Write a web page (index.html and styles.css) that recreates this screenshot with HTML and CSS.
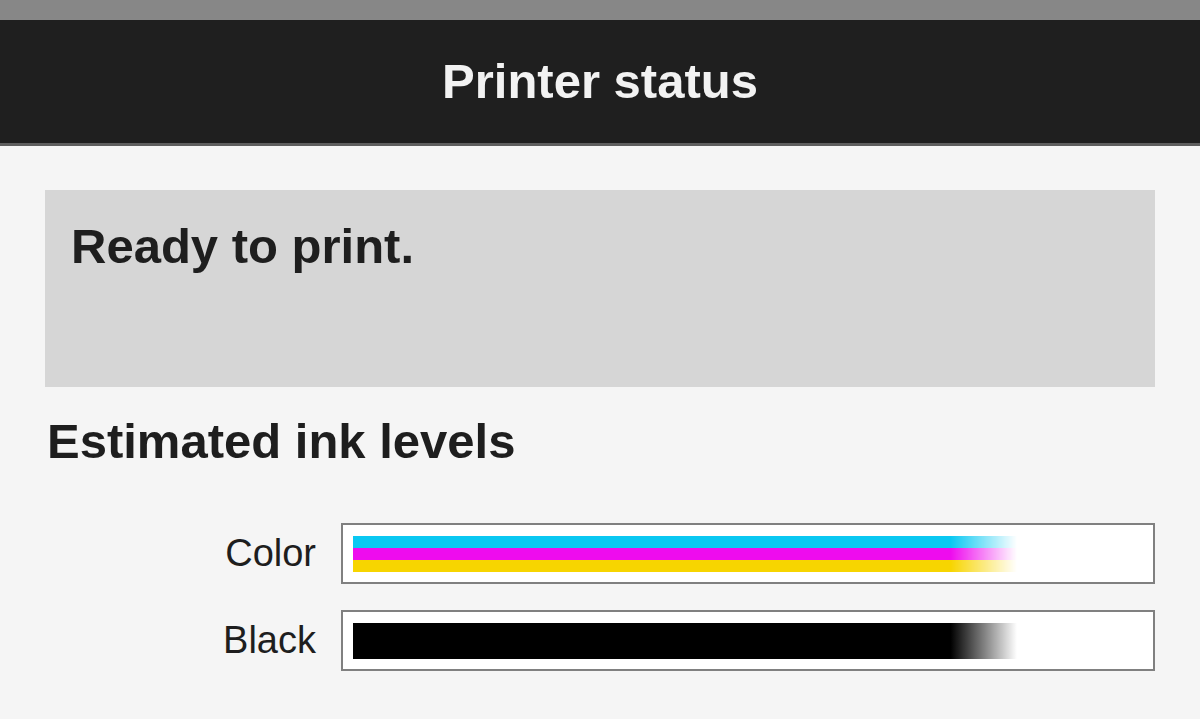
FILE: index.html
```html
<!DOCTYPE html>
<html lang="en">
<head>
  <meta charset="UTF-8">
  <title>Printer status</title>
  <link rel="stylesheet" href="styles.css">
</head>
<body>
  <div class="top-strip"></div>
  <header class="title-bar">
    <h1>Printer status</h1>
  </header>
  <main class="content">
    <div class="status-box">
      <p class="status-text">Ready to print.</p>
    </div>
    <h2>Estimated ink levels</h2>
    <div class="ink-list">
      <!-- Color cartridge -->
      <div class="ink-row">
        <span class="ink-label">Color</span>
        <div class="ink-bar">
          <div class="ink-fill color-fill" style="width: 84%;">
            <div class="stripe cyan"></div>
            <div class="stripe magenta"></div>
            <div class="stripe yellow"></div>
          </div>
        </div>
      </div>
      <!-- Black cartridge -->
      <div class="ink-row">
        <span class="ink-label">Black</span>
        <div class="ink-bar">
          <div class="ink-fill black-fill" style="width: 84%;"></div>
        </div>
      </div>
    </div>
  </main>
</body>
</html>
```

FILE: styles.css
```css
body {
  font-family: 'Liberation Sans', Arial, sans-serif;
  background: #f5f5f5;
  color: #1e1e1e;
  margin: 0;
  padding: 0;
}
.top-strip {
  height: 20px;
  background: #878787;
}
.title-bar {
  height: 123px;
  background: #1f1f1f;
  border-bottom: 3px solid #5e5e5e;
}
h1 {
  margin: 0;
  text-align: center;
  color: #f2f2f2;
  font-size: 49px;
  line-height: 123px;
  font-weight: bold;
}
.content {
  padding: 44px 45px 0 45px;
}
.status-box {
  background: #d6d6d6;
  height: 197px;
  box-sizing: border-box;
  padding: 28px 26px;
}
.status-text {
  margin: 0;
  font-size: 49px;
  font-weight: bold;
}
h2 {
  margin: 26px 0 0 2px;
  font-size: 49px;
  font-weight: bold;
}
.ink-list {
  margin-top: 54px;
  display: flex;
  flex-direction: column;
  gap: 26px;
}
.ink-row {
  display: flex;
  align-items: center;
  gap: 25px;
}
.ink-label {
  width: 271px;
  text-align: right;
  font-size: 38px;
}
.ink-bar {
  flex: 1;
  height: 61px;
  box-sizing: border-box;
  border: 2px solid #808080;
  background: #fff;
  padding: 11px 10px 10px 10px;
}
.ink-fill {
  height: 36px;
}
.color-fill {
  display: flex;
  flex-direction: column;
  -webkit-mask-image: linear-gradient(to right, #000 90%, transparent 100%);
  mask-image: linear-gradient(to right, #000 90%, transparent 100%);
}
.stripe { flex: 1; }
.cyan { background: #0ac8f2; }
.magenta { background: #ee0cee; }
.yellow { background: #f7d500; }
.black-fill {
  background: linear-gradient(to right, #000 90%, rgba(0, 0, 0, 0) 100%);
}
```
